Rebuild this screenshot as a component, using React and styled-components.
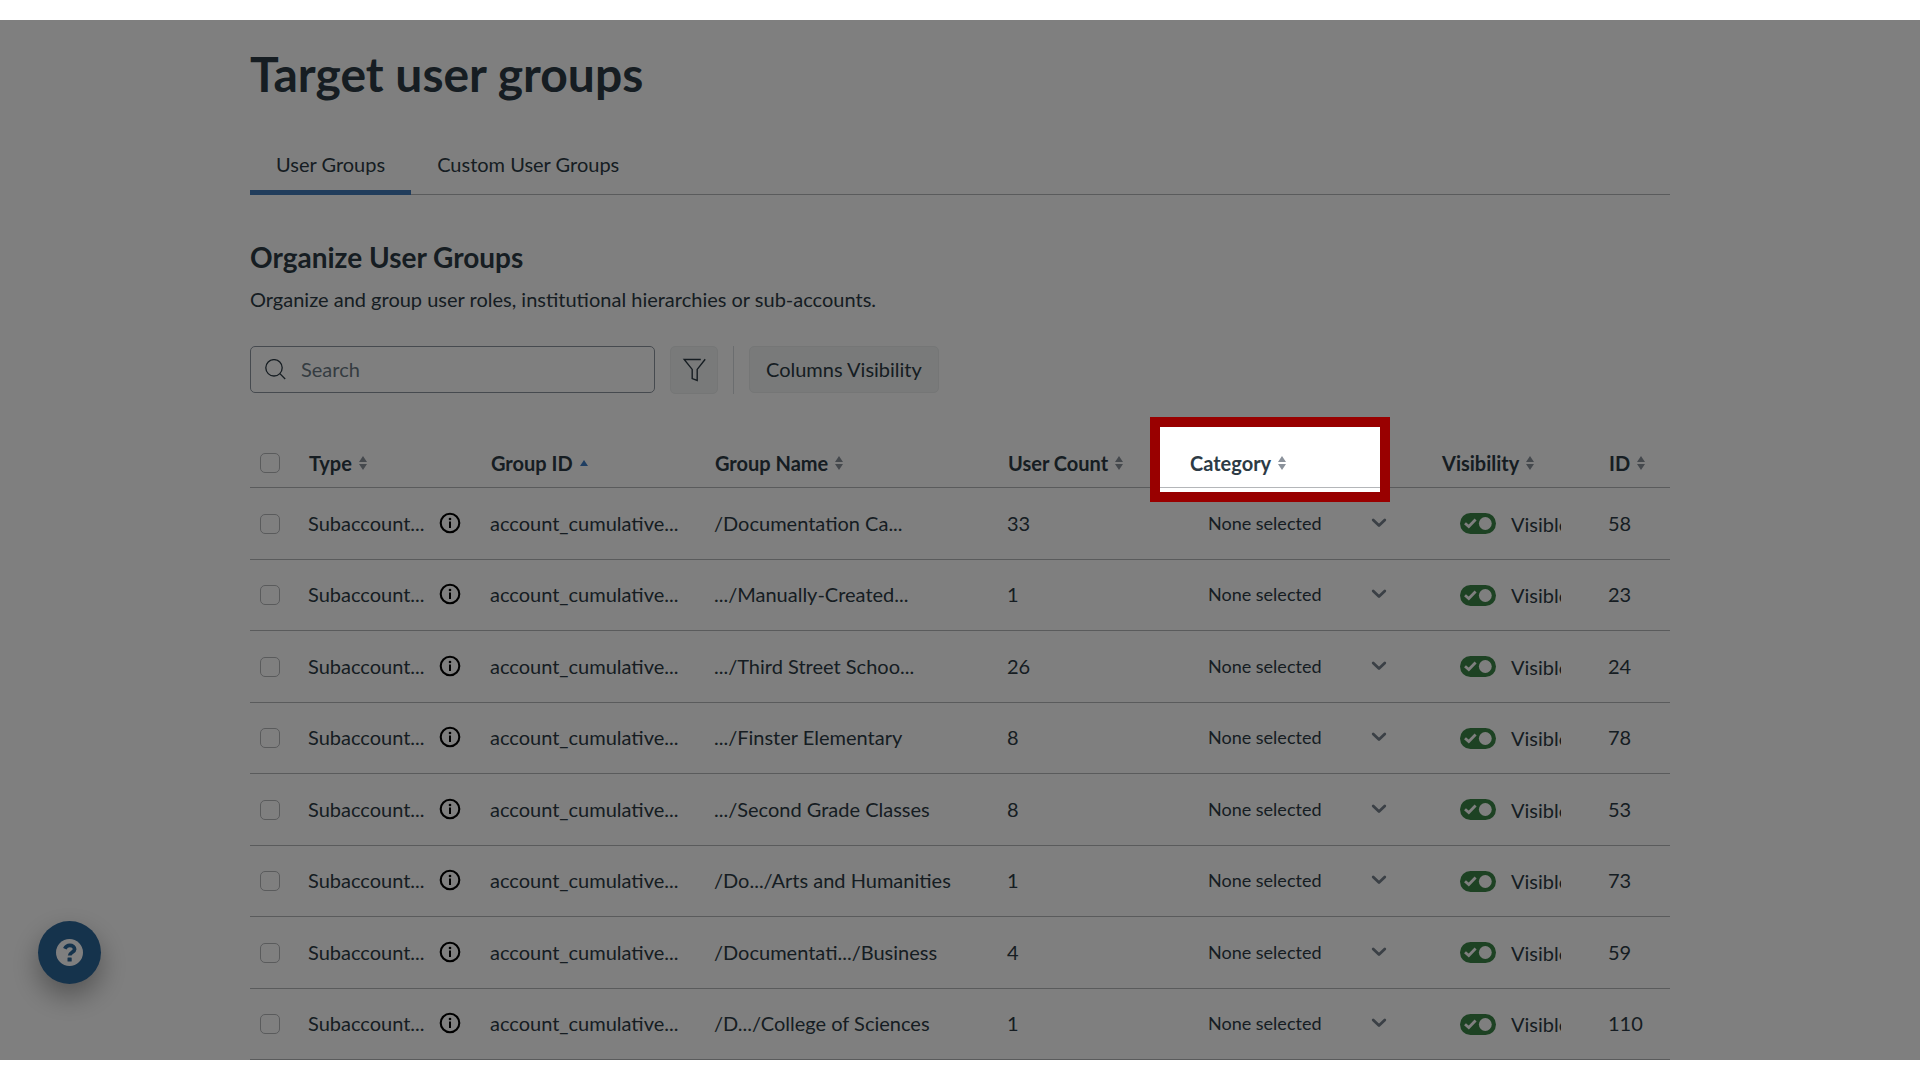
import React, { useState } from "react";
import styled, { createGlobalStyle } from "styled-components";

const GROUPS = [
  { id: 58, name: "/Documentation Ca...", count: 33 },
  { id: 23, name: ".../Manually-Created...", count: 1 },
  { id: 24, name: ".../Third Street Schoo...", count: 26 },
  { id: 78, name: ".../Finster Elementary", count: 8 },
  { id: 53, name: ".../Second Grade Classes", count: 8 },
  { id: 73, name: "/Do.../Arts and Humanities", count: 1 },
  { id: 59, name: "/Documentati.../Business", count: 4 },
  { id: 110, name: "/D.../College of Sciences", count: 1 },
];

const COLUMNS = [
  { label: "Type", width: 182 },
  { label: "Group ID", width: 224, sorted: true },
  { label: "Group Name", width: 293 },
  { label: "User Count", width: 182 },
  { label: "Category", width: 252, spotlight: true },
  { label: "Visibility", width: 167 },
  { label: "ID", width: 76 },
];

const SearchIcon = () => (
  <svg width="22" height="22" viewBox="0 0 22 22" fill="none" stroke="#2d3b45" strokeWidth="1.3" aria-hidden="true">
    <circle cx="9" cy="8.8" r="8.2" />
    <path d="M14.9 14.6L20.2 20" />
  </svg>
);

const FilterIcon = () => (
  <svg width="24" height="24" viewBox="0 0 24 24" fill="none" stroke="#2d3b45" strokeWidth="1.4" aria-hidden="true">
    <path d="M18.8 1.5H2.2L10.2 11.4V20.6L15.2 22.4V11.4L23.2 1.2" />
  </svg>
);

const SortIcon = ({ sorted }) =>
  sorted ? (
    <svg width="8" height="14" viewBox="0 0 8 14" aria-hidden="true">
      <path d="M4 4L8 10H0z" fill="#3f7cc4" />
    </svg>
  ) : (
    <svg width="8" height="14" viewBox="0 0 8 14" fill="#8b929b" aria-hidden="true">
      <path d="M4 0L8 6H0zM0 8H8L4 14z" />
    </svg>
  );

const InfoIcon = () => (
  <svg width="22" height="22" viewBox="0 0 22 22" aria-hidden="true">
    <circle cx="11" cy="11" r="9.3" fill="none" stroke="#000" strokeWidth="2.1" />
    <circle cx="11" cy="7" r="1.3" />
    <path d="M11 9.6V16" stroke="#000" strokeWidth="2" />
  </svg>
);

const ChevronIcon = () => (
  <svg width="16" height="10" viewBox="0 0 16 10" fill="none" stroke="#76818c" strokeWidth="2.8" strokeLinecap="round" strokeLinejoin="round" aria-hidden="true">
    <path d="M2.2 2L8 7.6L13.8 2" />
  </svg>
);

const ToggleTrack = ({ on }) => (
  <svg width="36" height="21" viewBox="0 0 36 21" aria-hidden="true">
    <rect width="36" height="21" rx="10.5" fill={on ? "#3a8446" : "#8b929b"} />
    <circle cx={on ? 25.3 : 10.7} cy="10.5" r="6.4" fill="#fff" />
    {on && <path d="M5 10.2L8.8 13.6L15.6 6.6" fill="none" stroke="#fff" strokeWidth="2.8" />}
  </svg>
);

const HelpIcon = () => (
  <svg width="27" height="27" viewBox="0 0 27 27" aria-hidden="true">
    <circle cx="13.5" cy="13.5" r="13.5" fill="#fff" />
    <path
      d="M8.8 9.8C9.8 7.6 11.4 6.4 13.8 6.4C16.4 6.4 18.6 8 18.6 10.3C18.6 13.2 13.7 13.3 13.7 16.6"
      fill="none"
      stroke="#2b6699"
      strokeWidth="3.8"
    />
    <rect x="11.5" y="18.4" width="4.2" height="4.2" rx="0.5" fill="#2b6699" />
  </svg>
);

const HeaderCell = ({ column }) => (
  <Th scope="col" aria-sort={column.sorted ? "ascending" : undefined}>
    <SortButton type="button">
      {column.label}
      <SortIcon sorted={column.sorted} />
    </SortButton>
    {column.spotlight && <Spotlight />}
  </Th>
);

const GroupRow = ({ group }) => {
  const [visible, setVisible] = useState(true);

  return (
    <Row>
      <CheckCell>
        <Checkbox type="checkbox" aria-label={`Select ${group.name}`} />
      </CheckCell>
      <Td>
        <TypeLabel>
          Subaccount...
          <InfoButton type="button" aria-label="More information">
            <InfoIcon />
          </InfoButton>
        </TypeLabel>
      </Td>
      <Td>account_cumulative...</Td>
      <Td>{group.name}</Td>
      <Td>{group.count}</Td>
      <Td>
        <SelectBox>
          <Select aria-label={`Category for ${group.name}`}>
            <option>None selected</option>
          </Select>
          <ChevronIcon />
        </SelectBox>
      </Td>
      <ToggleCell>
        <Toggle>
          <ToggleInput
            type="checkbox"
            role="switch"
            checked={visible}
            onChange={(e) => setVisible(e.target.checked)}
          />
          <ToggleTrack on={visible} />
          {visible ? "Visible" : "Hidden"}
        </Toggle>
      </ToggleCell>
      <Td>{group.id}</Td>
    </Row>
  );
};

const App = () => (
  <>
    <GlobalStyle />
    <Page>
      <Content>
        <Title>Target user groups</Title>
        <Tabs role="tablist">
          <Tab type="button" role="tab" aria-selected="true" $active>
            User Groups
          </Tab>
          <Tab type="button" role="tab" aria-selected="false">
            Custom User Groups
          </Tab>
        </Tabs>
        <Heading>Organize User Groups</Heading>
        <Description>
          Organize and group user roles, institutional hierarchies or sub-accounts.
        </Description>
        <Toolbar>
          <SearchBox>
            <SearchIcon />
            <SearchInput type="search" placeholder="Search" aria-label="Search" />
          </SearchBox>
          <IconButton type="button" aria-label="Filter">
            <FilterIcon />
          </IconButton>
          <Divider />
          <ColumnsButton type="button">Columns Visibility</ColumnsButton>
        </Toolbar>
        <Table>
          <colgroup>
            <Col $width={44} />
            {COLUMNS.map((column) => (
              <Col key={column.label} $width={column.width} />
            ))}
          </colgroup>
          <thead>
            <tr>
              <CheckHeader scope="col">
                <Checkbox type="checkbox" aria-label="Select all" />
              </CheckHeader>
              {COLUMNS.map((column) => (
                <HeaderCell key={column.label} column={column} />
              ))}
            </tr>
          </thead>
          <tbody>
            {GROUPS.map((group) => (
              <GroupRow key={group.id} group={group} />
            ))}
          </tbody>
        </Table>
      </Content>
      <HelpButton type="button" aria-label="Help">
        <HelpIcon />
      </HelpButton>
    </Page>
  </>
);

export default App;

const GlobalStyle = createGlobalStyle`
  * {
    box-sizing: border-box;
  }

  body {
    margin: 0;
    background: #fff;
    color: #2d3b45;
    font-family: Lato, "Liberation Sans", sans-serif;
    font-size: 20px;
    line-height: 24px;
  }

  button, input, select {
    font: inherit;
    color: inherit;
  }

  svg {
    flex-shrink: 0;
    display: block;
  }
`;

const Page = styled.div`
  position: relative;
  height: calc(100vh - 40px);
  margin: 20px 0;
  overflow: hidden;
  background: #fff;
`;

const Content = styled.main`
  max-width: 1420px;
  margin: 0 auto;
  padding-top: 24px;
`;

const Title = styled.h1`
  margin: 0;
  font-size: 48px;
  line-height: 60px;
`;

const Tabs = styled.div`
  display: flex;
  margin-top: 36px;
  box-shadow: inset 0 -1px 0 #b4b6b9;
`;

const Tab = styled.button`
  padding: 12px 26px 14px;
  border: none;
  border-bottom: 5px solid ${({ $active }) => ($active ? "#427ab8" : "transparent")};
  background: transparent;
  cursor: pointer;
`;

const Heading = styled.h2`
  margin: 45px 0 0;
  font-size: 28px;
  line-height: 34px;
`;

const Description = styled.p`
  margin: 13px 0 0;
`;

const Toolbar = styled.div`
  display: flex;
  align-items: flex-start;
  gap: 15px;
  margin-top: 35px;
`;

const SearchBox = styled.label`
  display: flex;
  align-items: center;
  gap: 14px;
  width: 405px;
  height: 47px;
  padding: 0 14px;
  border: 1px solid #8d959f;
  border-radius: 5px;
`;

const SearchInput = styled.input`
  flex: 1;
  min-width: 0;
  padding: 0 0 2px;
  border: none;
  outline: none;
  background: transparent;

  &::placeholder {
    color: #6a7883;
    opacity: 1;
  }
`;

const IconButton = styled.button`
  display: flex;
  align-items: center;
  justify-content: center;
  width: 48px;
  height: 48px;
  padding: 0;
  border: 1px solid #eaeded;
  border-radius: 5px;
  background: #f2f4f4;
  cursor: pointer;
`;

const Divider = styled.div`
  width: 1px;
  height: 48px;
  background: #d7dade;
`;

const ColumnsButton = styled.button`
  height: 47px;
  padding: 0 16px 2px;
  border: 1px solid #eaeded;
  border-radius: 5px;
  background: #f2f4f4;
  cursor: pointer;
`;

const Table = styled.table`
  width: 100%;
  margin-top: 46px;
  table-layout: fixed;
  border-collapse: separate;
  border-spacing: 0;
`;

const Col = styled.col`
  width: ${({ $width }) => $width}px;
`;

const Th = styled.th`
  position: relative;
  height: 48px;
  padding: 0 0 2px 15px;
  border-bottom: 1px solid #b4b6b9;
  text-align: left;
`;

const CheckHeader = styled(Th)`
  padding-left: 10px;
`;

const SortButton = styled.button`
  display: flex;
  align-items: center;
  gap: 7px;
  padding: 0;
  border: none;
  background: transparent;
  font-weight: bold;
  white-space: nowrap;
  cursor: pointer;
`;

/* everything outside the frame is dimmed by the spread shadow */
const Spotlight = styled.div`
  position: absolute;
  z-index: 10;
  top: -23px;
  right: 37px;
  bottom: -15px;
  left: -25px;
  border: 10px solid #990000;
  box-shadow: 0 0 0 9999px rgba(0, 0, 0, 0.5);
  pointer-events: none;
`;

const Row = styled.tr`
  height: 71px;

  &:nth-child(odd) {
    height: 72px;
  }
`;

const Td = styled.td`
  padding: 0 0 2px 14px;
  border-bottom: 1px solid #b4b6b9;
  white-space: nowrap;
`;

const CheckCell = styled(Td)`
  padding: 0 0 0 10px;
`;

const ToggleCell = styled(Td)`
  padding-bottom: 0;
`;

const Checkbox = styled.input`
  appearance: none;
  display: block;
  width: 20px;
  height: 20px;
  margin: 0;
  border: 1px solid #b4b6b9;
  border-radius: 5px;
  background: #fff;

  &:checked {
    background: #2d3b45;
  }
`;

const TypeLabel = styled.div`
  display: flex;
  align-items: center;
  gap: 14px;
`;

const InfoButton = styled.button`
  padding: 0;
  border: none;
  background: transparent;
  cursor: pointer;
`;

const SelectBox = styled.div`
  display: flex;
  align-items: center;
  position: relative;
  width: 212px;

  svg {
    position: absolute;
    right: 14px;
    pointer-events: none;
  }
`;

const Select = styled.select`
  appearance: none;
  width: 100%;
  height: 40px;
  padding: 0 40px 0 19px;
  border: none;
  background: transparent;
  font-size: 18px;
`;

const Toggle = styled.label`
  display: flex;
  align-items: center;
  gap: 15px;
  position: relative;
  width: 120px;
  padding-left: 19px;
  overflow: hidden;
`;

const ToggleInput = styled.input`
  position: absolute;
  width: 36px;
  height: 21px;
  margin: 0;
  opacity: 0;
`;

const HelpButton = styled.button`
  display: flex;
  align-items: center;
  justify-content: center;
  position: absolute;
  bottom: 76px;
  left: 38px;
  width: 63px;
  height: 63px;
  padding: 0;
  border: none;
  border-radius: 50%;
  background: #2b6699;
  box-shadow: 0 12px 28px rgba(0, 0, 0, 0.35);
  cursor: pointer;
`;
